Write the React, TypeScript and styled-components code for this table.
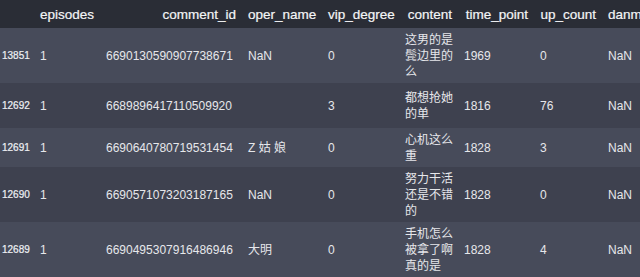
import { createGlobalStyle } from "styled-components";
import styled from "styled-components";

const GlobalStyle = createGlobalStyle`
  html, body {
    margin: 0;
    padding: 0;
    background: #3f4250;
    overflow: hidden;
  }
  body {
    font-family: "Liberation Sans", "Noto Sans CJK SC", sans-serif;
  }
`;

type Row = {
  index: string;
  episodes: string;
  commentId: string;
  operName: string;
  vipDegree: string;
  content: string;
  timePoint: string;
  upCount: string;
  danmu: string;
  height: number;
};

const rows: Row[] = [
  { index: "13851", episodes: "1", commentId: "6690130590907738671", operName: "NaN", vipDegree: "0", content: "这男的是鬓边里的么", timePoint: "1969", upCount: "0", danmu: "NaN", height: 55 },
  { index: "12692", episodes: "1", commentId: "6689896417110509920", operName: "", vipDegree: "3", content: "都想抢她的单", timePoint: "1816", upCount: "76", danmu: "NaN", height: 45 },
  { index: "12691", episodes: "1", commentId: "6690640780719531454", operName: "Z 姑 娘", vipDegree: "0", content: "心机这么重", timePoint: "1828", upCount: "3", danmu: "NaN", height: 39 },
  { index: "12690", episodes: "1", commentId: "6690571073203187165", operName: "NaN", vipDegree: "0", content: "努力干活还是不错的", timePoint: "1828", upCount: "0", danmu: "NaN", height: 55 },
  { index: "12689", episodes: "1", commentId: "6690495307916486946", operName: "大明", vipDegree: "0", content: "手机怎么被拿了啊真的是", timePoint: "1828", upCount: "4", danmu: "NaN", height: 56 },
];

const columns = [
  { key: "index", label: "", width: 38 },
  { key: "episodes", label: "episodes", width: 66 },
  { key: "commentId", label: "comment_id", width: 142 },
  { key: "operName", label: "oper_name", width: 80 },
  { key: "vipDegree", label: "vip_degree", width: 77 },
  { key: "content", label: "content", width: 59 },
  { key: "timePoint", label: "time_point", width: 76 },
  { key: "upCount", label: "up_count", width: 68 },
  { key: "danmu", label: "danmu", width: 34 },
] as const;

const App = () => {
  return (
    <>
      <GlobalStyle />
      <Frame>
        <Table>
          <colgroup>
            {columns.map((c) => (
              <col key={c.key} style={{ width: c.width }} />
            ))}
          </colgroup>
          <thead>
            <HeadRow>
              {columns.map((c) => (
                <HeadCell key={c.key}>{c.label}</HeadCell>
              ))}
            </HeadRow>
          </thead>
          <tbody>
            {rows.map((r, i) => (
              <BodyRow key={r.index} $odd={i % 2 === 0} style={{ height: r.height }}>
                <IndexCell>{r.index}</IndexCell>
                <Cell>{r.episodes}</Cell>
                <Cell>{r.commentId}</Cell>
                <Cell>{r.operName}</Cell>
                <Cell>{r.vipDegree}</Cell>
                <ContentCell>{r.content}</ContentCell>
                <Cell>{r.timePoint}</Cell>
                <Cell>{r.upCount}</Cell>
                <Cell>{r.danmu}</Cell>
              </BodyRow>
            ))}
          </tbody>
        </Table>
      </Frame>
    </>
  );
};

export default App;

const Frame = styled.div`
  width: 640px;
  height: 277px;
  overflow: hidden;
`;

const Table = styled.table`
  table-layout: fixed;
  border-collapse: collapse;
  border-spacing: 0;
  width: 640px;
`;

const HeadRow = styled.tr`
  height: 28px;
  background: #2a2d36;
`;

const HeadCell = styled.th`
  padding: 0 10px 0 2px;
  text-align: right;
  font-size: 13.5px;
  font-weight: normal;
  color: #f4f5f7;
  white-space: nowrap;
  overflow: hidden;
  -webkit-text-stroke: 0.2px #f4f5f7;

  &:nth-child(2),
  &:last-child {
    text-align: left;
  }

  &:last-child {
    padding-right: 0;
  }
`;

const BodyRow = styled.tr<{ $odd: boolean }>`
  background: ${({ $odd }) => ($odd ? "#474b5a" : "#3e414f")};
`;

const Cell = styled.td`
  padding: 0 10px 0 2px;
  font-size: 12px;
  line-height: 16px;
  color: #e6e7eb;
  vertical-align: middle;
  white-space: nowrap;
  overflow: hidden;

  &:last-child {
    padding-right: 0;
  }
`;

const ContentCell = styled(Cell)`
  white-space: normal;
  padding-right: 9px;
  word-break: break-all;
`;

const IndexCell = styled(Cell)`
  font-size: 10px;
  color: #eef0f4;
  padding-left: 2px;
  -webkit-text-stroke: 0.2px #eef0f4;
`;
